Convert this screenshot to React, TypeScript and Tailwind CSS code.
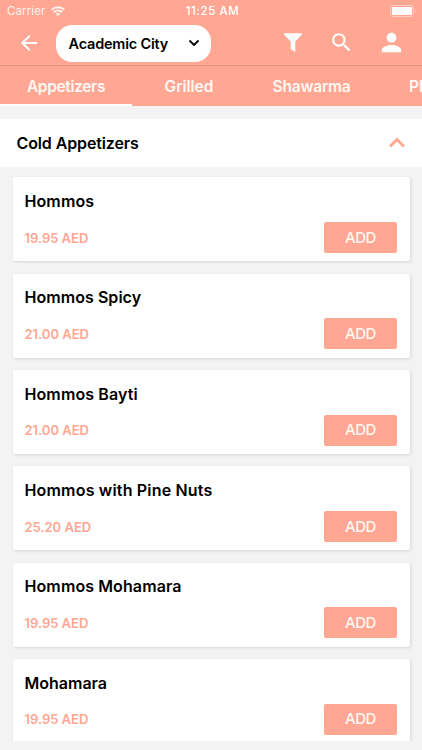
import { MdArrowBack, MdPerson, MdSearch } from "react-icons/md"

interface MenuItem {
  name: string
  price: string
  nameClass: string
}

const items: MenuItem[] = [
  { name: "Hommos", price: "19.95", nameClass: "tracking-[0.1px]" },
  { name: "Hommos Spicy", price: "21.00", nameClass: "tracking-[0.05px]" },
  { name: "Hommos Bayti", price: "21.00", nameClass: "tracking-[0.1px]" },
  { name: "Hommos with Pine Nuts", price: "25.20", nameClass: "tracking-[0.18px]" },
  { name: "Hommos Mohamara", price: "19.95", nameClass: "tracking-[0.1px]" },
  { name: "Mohamara", price: "19.95", nameClass: "tracking-normal" },
]

function StatusBar() {
  return (
    <div className="grid h-[22px] grid-cols-[1fr_auto_1fr] items-center pl-[7px] pr-[5px] text-[11.5px] leading-[22px]">
      <div className="flex items-center gap-[6px] opacity-85">
        <span className="tracking-[0.1px]">Carrier</span>
        <svg className="-mt-px" width="14" height="10" viewBox="0 0 14 10" fill="none" stroke="currentColor" strokeWidth="2">
          <path d="M.7 3.8a9 9 0 0 1 12.6 0" />
          <path d="M2.9 6.2a5.8 5.8 0 0 1 8.2 0" />
          <path d="M7 10 4.9 7.9a3 3 0 0 1 4.2 0z" fill="currentColor" stroke="none" />
        </svg>
      </div>
      <span className="pl-px font-medium tracking-[0.6px]">11:25 AM</span>
      <svg className="-mt-px justify-self-end" width="27" height="12" viewBox="0 0 27 12">
        <rect x="0.5" y="0.5" width="23" height="11" rx="2.5" fill="none" stroke="white" strokeOpacity="0.4" />
        <rect x="2" y="2" width="20" height="8" rx="1" fill="white" />
        <path d="M25 4v4c1.3-.5 1.3-3.5 0-4z" fill="white" fillOpacity="0.5" />
      </svg>
    </div>
  )
}

function Header() {
  return (
    <div className="flex h-[44px] items-start border-b border-[#dd9384]">
      <MdArrowBack className="ml-[17px] mt-[9px] size-[24px]" />
      <button className="ml-[15px] mt-[2.5px] flex h-[37px] w-[155px] items-center justify-between rounded-[16px] bg-white pl-[12.5px] pr-[11px] text-black">
        <span className="whitespace-nowrap pt-px text-[14.5px] font-semibold tracking-[-0.2px]">Academic City</span>
        <svg width="12" height="8" viewBox="0 0 12 8" fill="none" stroke="currentColor" strokeWidth="1.8">
          <path d="M1.5 1.5 6 6l4.5-4.5" />
        </svg>
      </button>
      <svg className="ml-[73px] mt-[11px]" width="18" height="20" viewBox="0 0 18 20" fill="currentColor">
        <path d="M0 .3h18v1.2L11.3 8.600v10.700L6.700 16V8.600L0 1.500z" />
      </svg>
      <MdSearch className="ml-[27px] mt-[8px] size-[25px]" />
      <MdPerson className="ml-[23px] mt-[6px] size-[29px]" />
    </div>
  )
}

function Tabs() {
  return (
    <div className="flex h-[40px] overflow-hidden whitespace-nowrap text-[15.5px] font-semibold text-[#fff8f5]">
      <div className="flex w-[132px] shrink-0 items-center justify-center border-b-2 border-white pt-[4px] tracking-[-0.35px]">Appetizers</div>
      <div className="flex w-[114px] shrink-0 items-center justify-center pt-[2px]">Grilled</div>
      <div className="flex w-[131px] shrink-0 items-center justify-center pt-[2px] tracking-[-0.2px]">Shawarma</div>
      <div className="flex shrink-0 items-center pl-[32px] pt-[2px]">Platters</div>
    </div>
  )
}

function ItemCard({ name, price, nameClass }: MenuItem) {
  return (
    <div className="h-[84px] shrink-0 rounded-[2px] bg-white pl-[12px] pr-[12.5px] pt-[12.7px] shadow-[1px_1px_3px_rgba(0,0,0,0.12)]">
      <div className={`text-[16px] font-semibold leading-[22px] ${nameClass}`}>{name}</div>
      <div className="mt-[10px] flex h-[31px] items-center justify-between">
        <span className="pt-[2px] text-[13px] font-semibold tracking-[-0.02px] text-[#ffa793]">{price} AED</span>
        <button className="h-[31px] w-[73px] rounded-[2px] bg-[#ffa793] pt-px text-[15px] font-medium tracking-[-0.4px] text-[#fff8f4]">ADD</button>
      </div>
    </div>
  )
}

export default function App() {
  return (
    <div className="flex h-[750px] w-[422px] flex-col overflow-hidden bg-[#f3f3f3] font-['Inter',sans-serif] text-black">
      <div className="bg-[#ffa793] text-white">
        <StatusBar />
        <Header />
        <Tabs />
      </div>
      <div className="mt-[12.5px] flex h-[48.5px] shrink-0 items-center justify-between bg-white pl-[16.5px] pr-[16px]">
        <h2 className="text-[16px] font-semibold tracking-[-0.12px]">Cold Appetizers</h2>
        <svg width="18" height="12" viewBox="0 0 18 12" fill="none" stroke="#ffa793" strokeWidth="2.8">
          <path d="M2 9.5 9 2.5l7 7" />
        </svg>
      </div>
      {/* the list is cut off above the home area */}
      <div className="mb-[9px] flex min-h-0 flex-1 flex-col gap-[12.3px] overflow-hidden px-[12.5px] pt-[10.4px]">
        {items.map(item => (
          <ItemCard key={item.name} {...item} />
        ))}
      </div>
    </div>
  )
}
